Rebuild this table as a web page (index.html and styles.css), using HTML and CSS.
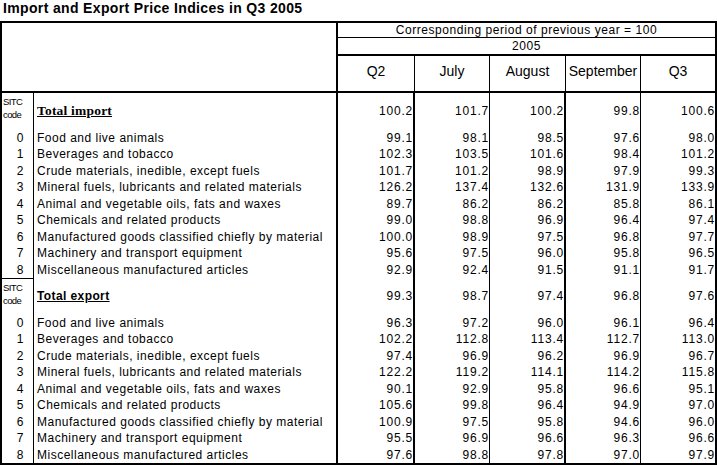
FILE: index.html
```html
<!DOCTYPE html>
<html>
<head>
<meta charset="utf-8">
<link rel="stylesheet" href="styles.css">
</head>
<body>
<div class="page">
  <div class="title">Import and Export Price Indices in Q3 2005</div>
  <div class="tbl">
    <div class="head">
      <div class="corner"></div>
      <div class="hright">
        <div class="hr1">Corresponding period of previous year = 100</div>
        <div class="hr2">2005</div>
        <div class="hr3">
          <div class="hc">Q2</div>
          <div class="hc">July</div>
          <div class="hc">August</div>
          <div class="hc">September</div>
          <div class="hc">Q3</div>
        </div>
      </div>
    </div>

    <div class="row sect">
      <div class="c code sitc">SITC<br>code</div>
      <div class="c name total-imp">Total import</div>
      <div class="c v">100.2</div><div class="c v">101.7</div><div class="c v">100.2</div><div class="c v">99.8</div><div class="c v">100.6</div>
    </div>
    <div class="row item"><div class="c code">0</div><div class="c name">Food and live animals</div><div class="c v">99.1</div><div class="c v">98.1</div><div class="c v">98.5</div><div class="c v">97.6</div><div class="c v">98.0</div></div>
    <div class="row item"><div class="c code">1</div><div class="c name">Beverages and tobacco</div><div class="c v">102.3</div><div class="c v">103.5</div><div class="c v">101.6</div><div class="c v">98.4</div><div class="c v">101.2</div></div>
    <div class="row item"><div class="c code">2</div><div class="c name">Crude materials, inedible, except fuels</div><div class="c v">101.7</div><div class="c v">101.2</div><div class="c v">98.9</div><div class="c v">97.9</div><div class="c v">99.3</div></div>
    <div class="row item"><div class="c code">3</div><div class="c name">Mineral fuels, lubricants and related materials</div><div class="c v">126.2</div><div class="c v">137.4</div><div class="c v">132.6</div><div class="c v">131.9</div><div class="c v">133.9</div></div>
    <div class="row item"><div class="c code">4</div><div class="c name">Animal and vegetable oils, fats and waxes</div><div class="c v">89.7</div><div class="c v">86.2</div><div class="c v">86.2</div><div class="c v">85.8</div><div class="c v">86.1</div></div>
    <div class="row item"><div class="c code">5</div><div class="c name">Chemicals and related products</div><div class="c v">99.0</div><div class="c v">98.8</div><div class="c v">96.9</div><div class="c v">96.4</div><div class="c v">97.4</div></div>
    <div class="row item"><div class="c code">6</div><div class="c name">Manufactured goods classified chiefly by material</div><div class="c v">100.0</div><div class="c v">98.9</div><div class="c v">97.5</div><div class="c v">96.8</div><div class="c v">97.7</div></div>
    <div class="row item"><div class="c code">7</div><div class="c name">Machinery and transport equipment</div><div class="c v">95.6</div><div class="c v">97.5</div><div class="c v">96.0</div><div class="c v">95.8</div><div class="c v">96.5</div></div>
    <div class="row item"><div class="c code">8</div><div class="c name">Miscellaneous manufactured articles</div><div class="c v">92.9</div><div class="c v">92.4</div><div class="c v">91.5</div><div class="c v">91.1</div><div class="c v">91.7</div></div>

    <div class="row sect">
      <div class="c code sitc ruled">SITC<br>code</div>
      <div class="c name total-exp">Total export</div>
      <div class="c v">99.3</div><div class="c v">98.7</div><div class="c v">97.4</div><div class="c v">96.8</div><div class="c v">97.6</div>
    </div>
    <div class="row item"><div class="c code">0</div><div class="c name">Food and live animals</div><div class="c v">96.3</div><div class="c v">97.2</div><div class="c v">96.0</div><div class="c v">96.1</div><div class="c v">96.4</div></div>
    <div class="row item"><div class="c code">1</div><div class="c name">Beverages and tobacco</div><div class="c v">102.2</div><div class="c v">112.8</div><div class="c v">113.4</div><div class="c v">112.7</div><div class="c v">113.0</div></div>
    <div class="row item"><div class="c code">2</div><div class="c name">Crude materials, inedible, except fuels</div><div class="c v">97.4</div><div class="c v">96.9</div><div class="c v">96.2</div><div class="c v">96.9</div><div class="c v">96.7</div></div>
    <div class="row item"><div class="c code">3</div><div class="c name">Mineral fuels, lubricants and related materials</div><div class="c v">122.2</div><div class="c v">119.2</div><div class="c v">114.1</div><div class="c v">114.2</div><div class="c v">115.8</div></div>
    <div class="row item"><div class="c code">4</div><div class="c name">Animal and vegetable oils, fats and waxes</div><div class="c v">90.1</div><div class="c v">92.9</div><div class="c v">95.8</div><div class="c v">96.6</div><div class="c v">95.1</div></div>
    <div class="row item"><div class="c code">5</div><div class="c name">Chemicals and related products</div><div class="c v">105.6</div><div class="c v">99.8</div><div class="c v">96.4</div><div class="c v">94.9</div><div class="c v">97.0</div></div>
    <div class="row item"><div class="c code">6</div><div class="c name">Manufactured goods classified chiefly by material</div><div class="c v">100.9</div><div class="c v">97.5</div><div class="c v">95.8</div><div class="c v">94.6</div><div class="c v">96.0</div></div>
    <div class="row item"><div class="c code">7</div><div class="c name">Machinery and transport equipment</div><div class="c v">95.5</div><div class="c v">96.9</div><div class="c v">96.6</div><div class="c v">96.3</div><div class="c v">96.6</div></div>
    <div class="row item"><div class="c code">8</div><div class="c name">Miscellaneous manufactured articles</div><div class="c v">97.6</div><div class="c v">98.8</div><div class="c v">97.8</div><div class="c v">97.0</div><div class="c v">97.9</div></div>
  </div>
</div>
</body>
</html>
```

FILE: styles.css
```css
html, body {
  margin: 0;
  padding: 0;
  background: #fff;
}
body {
  font-family: "Liberation Sans", Arial, sans-serif;
  color: #000;
}
.page {
  width: 717px;
}
.title {
  height: 21px;
  line-height: 16px;
  font-size: 14px;
  font-weight: bold;
  letter-spacing: 0.35px;
  padding-left: 3px;
  box-sizing: border-box;
  white-space: nowrap;
}
.tbl {
  width: 717px;
  border: 2px solid #000;
  box-sizing: border-box;
}
.head {
  display: grid;
  grid-template-columns: 336px 377px;
  border-bottom: 2px solid #000;
}
.corner {
  border-right: 2px solid #000;
}
.hr1 {
  height: 15px;
  box-sizing: border-box;
  border-bottom: 1px solid #000;
  padding-top: 1px;
  line-height: 13px;
  font-size: 12px;
  letter-spacing: 0.55px;
  text-align: center;
  white-space: nowrap;
}
.hr2 {
  height: 18px;
  box-sizing: border-box;
  border-bottom: 2px solid #000;
  line-height: 16px;
  font-size: 12px;
  letter-spacing: 0.55px;
  text-align: center;
}
.hr3 {
  display: grid;
  grid-template-columns: 77px 75px 76px 75px 74px;
  height: 35px;
}
.hc {
  border-right: 1px solid #000;
  font-size: 14px;
  line-height: 31px;
  text-align: center;
  white-space: nowrap;
}
.hc:last-child {
  border-right: 0;
}
.row {
  display: grid;
  grid-template-columns: 32px 304px 77px 75px 76px 75px 74px;
}
.row.sect {
  height: 36.5px;
}
.row.item {
  height: 16.5px;
  line-height: 16.5px;
}
.c {
  border-right: 1px solid #000;
  box-sizing: border-box;
  white-space: nowrap;
  overflow: hidden;
  font-size: 12px;
}
.c:nth-child(2),
.c:nth-child(3),
.c:nth-child(5) {
  border-right-width: 2px;
}
.c:last-child {
  border-right: 0;
}
.code {
  text-align: center;
  padding-left: 5px;
}
.name {
  padding-left: 3px;
  letter-spacing: 0.5px;
}
.v {
  text-align: right;
  letter-spacing: 0.8px;
}
.sect .name,
.sect .v {
  display: flex;
  align-items: center;
}
.sect .v {
  justify-content: flex-end;
}
.sitc {
  text-align: left;
  padding: 2px 0 0 1px;
  font-size: 9.5px;
  line-height: 13px;
  letter-spacing: -0.6px;
}
.sitc.ruled {
  border-top: 1px solid #000;
}
.total-imp {
  font-family: "Liberation Serif", "Times New Roman", serif;
  font-weight: bold;
  font-size: 13.5px;
  letter-spacing: 0.2px;
  text-decoration: underline;
}
.total-exp {
  font-weight: bold;
  font-size: 12px;
  letter-spacing: 0.4px;
  text-decoration: underline;
}
```
